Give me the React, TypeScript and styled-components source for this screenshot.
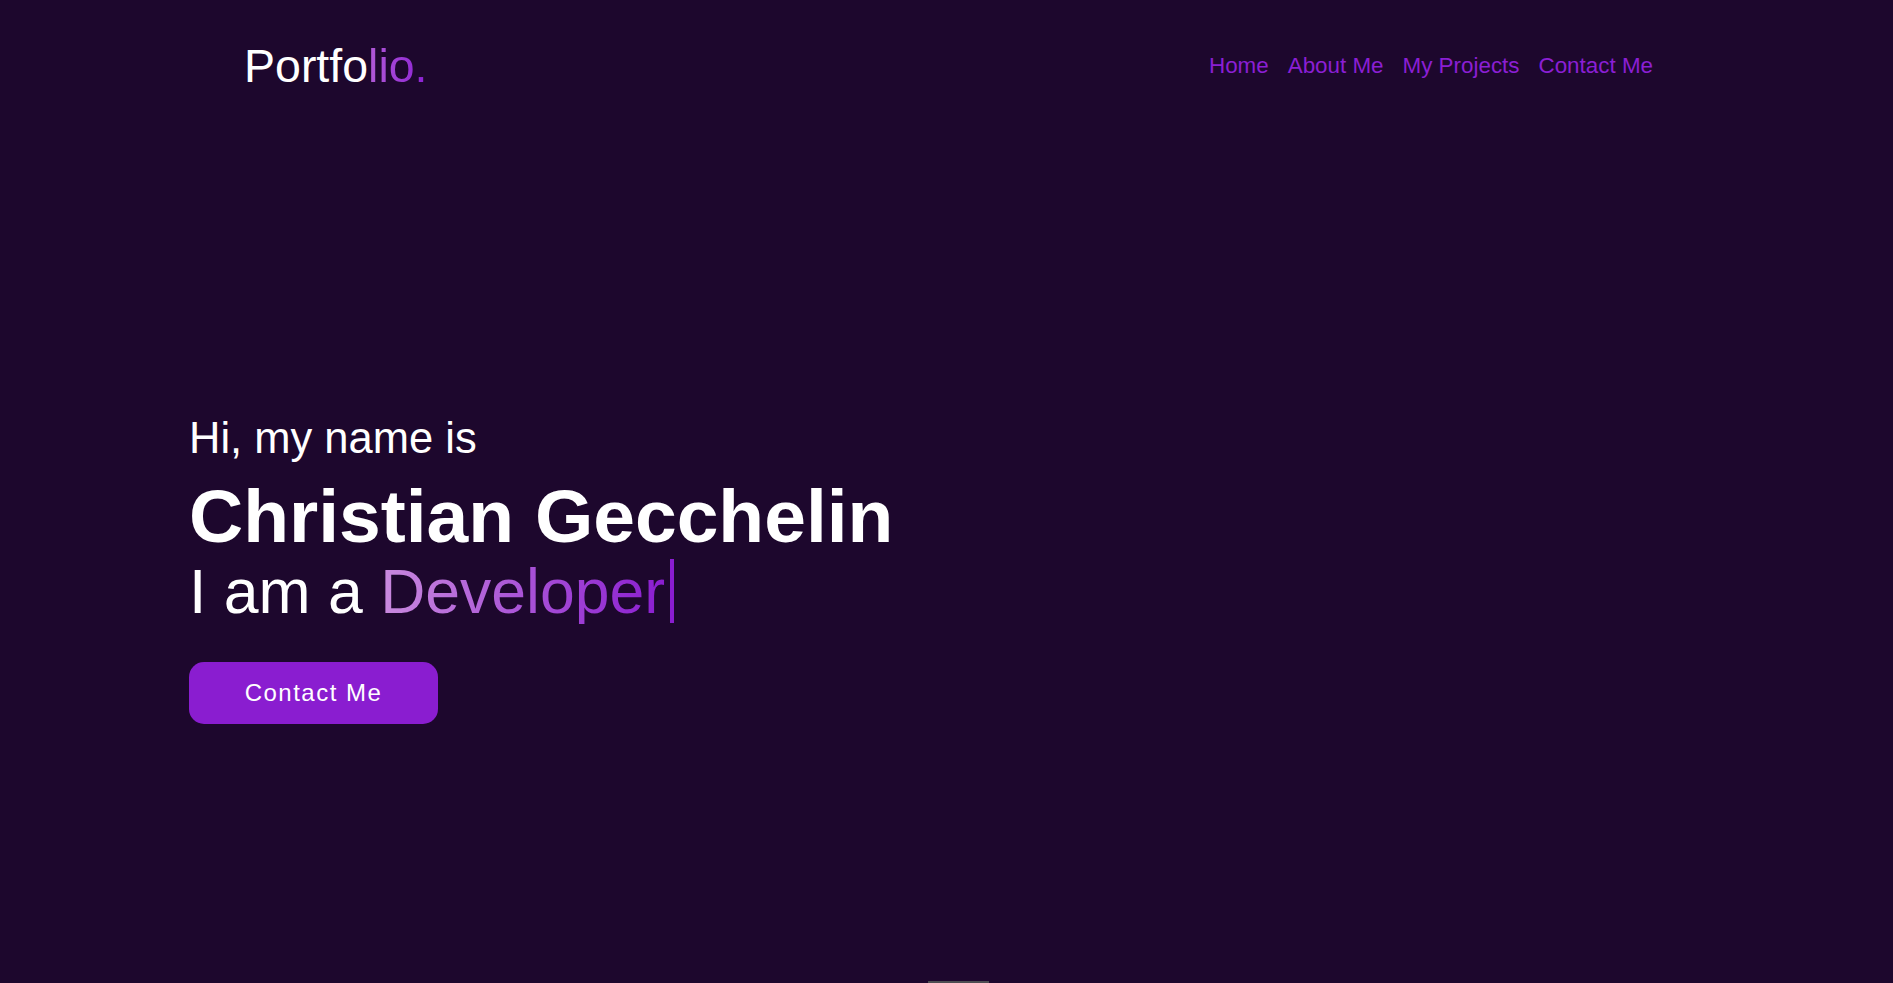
import React from "react";
import styled, { createGlobalStyle } from "styled-components";

const Global = createGlobalStyle`
  html, body { margin: 0; padding: 0; background: #1d072d; overflow: hidden; }
  body { font-family: "Liberation Sans", Arial, sans-serif; }
  * { box-sizing: border-box; }
`;

const Page = styled.div`
  height: 983px;
  background: #1d072d;
  display: flex;
  flex-direction: column;
`;

const Header = styled.header`
  height: 132px;
  padding: 0 240px 0 244px;
  display: flex;
  align-items: center;
  justify-content: space-between;
`;

const Logo = styled.div`
  font-size: 46.5px;
  line-height: 1;
  color: #ffffff;
`;

const Accent = styled.span`
  background: linear-gradient(90deg, #b15ad6 0%, #8b1fd4 100%);
  -webkit-background-clip: text;
  background-clip: text;
  color: transparent;
`;

const Nav = styled.nav`
  display: flex;
  gap: 19px;
`;

const NavLink = styled.a`
  font-size: 22.4px;
  line-height: 1;
  color: #8b1fd4;
  text-decoration: none;
`;

const Hero = styled.section`
  flex: 1;
  padding: 285px 0 0 189px;
  display: flex;
  flex-direction: column;
  align-items: flex-start;
`;

const Greeting = styled.div`
  font-size: 43.5px;
  line-height: 1;
  color: #ffffff;
`;

const Name = styled.h1`
  margin: 18px 0 0;
  font-size: 75px;
  font-weight: 700;
  line-height: 1;
  color: #ffffff;
`;

const Role = styled.div`
  margin-top: 5px;
  font-size: 62.5px;
  line-height: 1.05;
  color: #ffffff;
  display: flex;
  align-items: center;
`;

const Typed = styled.span`
  margin-left: 0.28em;
  background: linear-gradient(90deg, #c98ade 0%, #8a1dd0 100%);
  -webkit-background-clip: text;
  background-clip: text;
  color: transparent;
`;

const Cursor = styled.span`
  display: inline-block;
  width: 4px;
  height: 64px;
  margin-left: 5px;
  background: #8a1dd0;
`;

const Button = styled.button`
  margin-top: 38px;
  width: 249px;
  height: 62px;
  border: none;
  border-radius: 15px;
  background: #8a1dd0;
  color: #ffffff;
  font-family: "Liberation Sans", Arial, sans-serif;
  font-size: 24px;
  letter-spacing: 1.5px;
  cursor: pointer;
`;

const Footer = styled.div`
  display: flex;
  justify-content: center;
  padding-left: 24px;
`;

const ScrollBar = styled.div`
  width: 61px;
  height: 2px;
  background: #4d4d52;
`;

export default function App() {
  return (
    <>
      <Global />
      <Page>
        <Header>
          <Logo>
            Portfo<Accent>lio.</Accent>
          </Logo>
          <Nav>
            <NavLink href="#">Home</NavLink>
            <NavLink href="#">About Me</NavLink>
            <NavLink href="#">My Projects</NavLink>
            <NavLink href="#">Contact Me</NavLink>
          </Nav>
        </Header>
        <Hero>
          <Greeting>Hi, my name is</Greeting>
          <Name>Christian Gecchelin</Name>
          <Role>
            I am a<Typed>Developer</Typed>
            <Cursor />
          </Role>
          <Button>Contact Me</Button>
        </Hero>
        <Footer>
          <ScrollBar />
        </Footer>
      </Page>
    </>
  );
}
